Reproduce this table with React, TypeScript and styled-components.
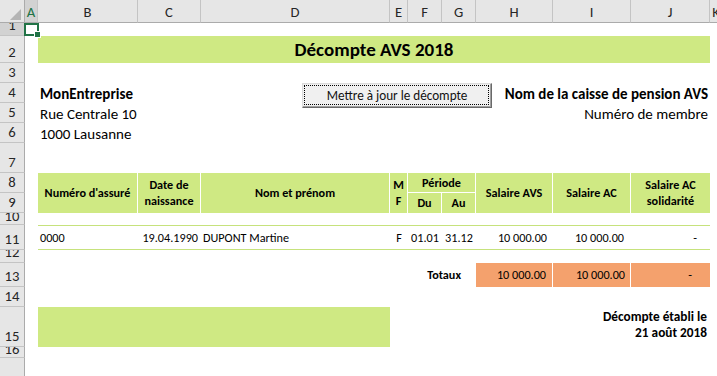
import React from "react";
import styled, { createGlobalStyle } from "styled-components";

const GREEN = "#cfe983";
const LINE_GREEN = "#c6e27c";
const ORANGE = "#f4a16d";
const FONT = `Carlito, Lato, "Liberation Sans", sans-serif`;

const GlobalStyle = createGlobalStyle`
  html, body {
    margin: 0;
    padding: 0;
    background: #fff;
  }
  body {
    font-family: ${FONT};
    color: #000;
  }
`;

const COLS = ["A", "B", "C", "D", "E", "F", "G", "H", "I", "J", "K"];
const ROW_HEIGHTS = [13, 27, 20, 20, 20, 20, 30, 20, 20, 12, 25, 13, 24, 20, 40, 11, 40];
// rows too short for their number: Excel shows the label clipped at the top
const CLIPPED_ROWS = [1, 12, 16];

// grid line helpers: column "A" is grid column 2, sheet row n is grid row n + 1
const colIndex = (c: string) => COLS.indexOf(c) + 2;
const area = (r1: number, c1: string, r2 = r1, c2 = c1) =>
  `${r1 + 1} / ${colIndex(c1)} / ${r2 + 2} / ${colIndex(c2) + 1}`;

type Align = "left" | "center" | "right";

const Sheet = styled.div`
  position: relative;
  width: 717px;
  height: 376px;
  overflow: hidden;
  display: grid;
  grid-template-columns: 25px 13px 100px 63px 189px 18px 34px 34px 77px 78px 79px 13px;
  grid-template-rows: 23px ${ROW_HEIGHTS.map((h) => `${h}px`).join(" ")};
  font-size: 14.67px;
  background: #fff;
`;

const Corner = styled.div`
  grid-area: 1 / 1 / 2 / 2;
  background: #e6e6e6;
  border-right: 1px solid #ababab;
  border-bottom: 1px solid #ababab;
  box-sizing: border-box;
`;

const ColHead = styled.div<{ $col: number; $selected?: boolean }>`
  grid-row: 1;
  grid-column: ${(p) => p.$col};
  display: flex;
  align-items: center;
  justify-content: center;
  padding-top: 1px;
  background: ${(p) => (p.$selected ? "#d2d2d2" : "#e6e6e6")};
  color: ${(p) => (p.$selected ? "#217346" : "#262626")};
  border-right: 1px solid #c4c4c4;
  border-bottom: 1px solid #ababab;
  box-sizing: border-box;
  font-size: 14.67px;
  overflow: hidden;
`;

const RowHead = styled.div<{ $row: number; $clipped?: boolean; $pad: number; $selected?: boolean }>`
  grid-column: 1;
  grid-row: ${(p) => p.$row + 1};
  display: flex;
  align-items: ${(p) => (p.$clipped ? "flex-start" : "flex-end")};
  justify-content: center;
  padding-bottom: ${(p) => (p.$clipped ? 0 : p.$pad)}px;
  background: ${(p) => (p.$selected ? "#d2d2d2" : "#e6e6e6")};
  color: #262626;
  border-right: 1px solid #ababab;
  border-bottom: 1px solid #c4c4c4;
  box-sizing: border-box;
  font-size: 14.67px;
  line-height: 16px;
  overflow: hidden;
  span {
    margin-top: ${(p) => (p.$clipped ? -6 : 0)}px;
  }
`;

const Selection = styled.div`
  grid-area: ${area(1, "A")};
  position: relative;
  margin: 0 -1px 0 -1px;
  border: 2px solid #217346;
  &::after {
    content: "";
    position: absolute;
    right: -4px;
    bottom: -4px;
    width: 5px;
    height: 5px;
    background: #217346;
    border: 1px solid #fff;
  }
`;

const Cell = styled.div<{
  $area: string;
  $align?: Align;
  $bold?: boolean;
  $valign?: "center" | "end";
  $pad?: number;
}>`
  grid-area: ${(p) => p.$area};
  display: flex;
  flex-direction: column;
  justify-content: ${(p) => (p.$valign === "end" ? "flex-end" : "center")};
  align-items: ${(p) =>
    p.$align === "right" ? "flex-end" : p.$align === "center" ? "center" : "flex-start"};
  text-align: ${(p) => p.$align ?? "left"};
  font-weight: ${(p) => (p.$bold ? 700 : 400)};
  padding: 0 ${(p) => p.$pad ?? 2}px ${(p) => (p.$valign === "end" ? 1 : 0)}px;
  line-height: 16px;
  white-space: nowrap;
  min-width: 0;
`;

const Title = styled(Cell)`
  background: ${GREEN};
  font-size: 19px;
  line-height: 22px;
`;

const InfoCell = styled(Cell)`
  font-size: 15px;
`;

const HeadCell = styled(Cell)<{ $last?: boolean; $under?: boolean }>`
  font-size: 12.2px;
  background: ${GREEN};
  border-right: ${(p) => (p.$last ? "none" : "1px solid #fff")};
  border-bottom: ${(p) => (p.$under ? "1px solid #fff" : "none")};
`;

const DataCell = styled(Cell)`
  font-size: 12.2px;
`;

const TotalCell = styled(DataCell)<{ $last?: boolean }>`
  background: ${ORANGE};
  border-right: ${(p) => (p.$last ? "none" : "1px solid #fff")};
`;

const DataLine = styled.div`
  grid-area: ${area(11, "B", 11, "J")};
  border-top: 1px solid ${LINE_GREEN};
  border-bottom: 1px solid ${LINE_GREEN};
`;

const Band = styled.div<{ $area: string }>`
  grid-area: ${(p) => p.$area};
  background: ${GREEN};
`;

const StampCell = styled(Cell)`
  font-size: 13.3px;
  padding-bottom: 4px;
`;

const UpdateButton = styled.button`
  position: absolute;
  left: 302px;
  top: 83px;
  width: 190px;
  height: 25px;
  box-sizing: border-box;
  padding: 0;
  background: #f0f0f0;
  border: 1px solid;
  border-color: #dcdcdc #696969 #696969 #dcdcdc;
  box-shadow: inset -1px -1px #a0a0a0;
  font-family: ${FONT};
  font-size: 13.2px;
  color: #111;
  &::before {
    content: "";
    position: absolute;
    inset: 1px 2px 2px 1px;
    border: 1px dotted #000;
  }
`;

const App = () => {
  return (
    <>
      <GlobalStyle />
      <Sheet>
        <Corner>
          <svg width="24" height="22" viewBox="0 0 24 22">
            <polygon points="21,9 21,20 10,20" fill="#b4b4b4" />
          </svg>
        </Corner>
        {COLS.map((c, i) => (
          <ColHead key={c} $col={i + 2} $selected={c === "A"}>
            {c}
          </ColHead>
        ))}
        {ROW_HEIGHTS.map((h, i) => (
          <RowHead
            key={i}
            $row={i + 1}
            $clipped={CLIPPED_ROWS.includes(i + 1)}
            $pad={h < 15 ? 0 : 2}
            $selected={i === 0}
          >
            <span>{i + 1}</span>
          </RowHead>
        ))}

        <Title $area={area(2, "B", 2, "J")} $align="center" $bold>
          Décompte AVS 2018
        </Title>

        <InfoCell $area={area(4, "B", 4, "D")} $bold $valign="end">MonEntreprise</InfoCell>
        <InfoCell $area={area(5, "B", 5, "D")} $valign="end">Rue Centrale 10</InfoCell>
        <InfoCell $area={area(6, "B", 6, "D")} $valign="end">1000 Lausanne</InfoCell>
        <InfoCell $area={area(4, "F", 4, "J")} $align="right" $bold $valign="end">
          Nom de la caisse de pension AVS
        </InfoCell>
        <InfoCell $area={area(5, "F", 5, "J")} $align="right" $valign="end">
          Numéro de membre
        </InfoCell>

        <HeadCell $area={area(8, "B", 9, "B")} $align="center" $bold>Numéro d'assuré</HeadCell>
        <HeadCell $area={area(8, "C", 9, "C")} $align="center" $bold>
          <span>Date de</span>
          <span>naissance</span>
        </HeadCell>
        <HeadCell $area={area(8, "D", 9, "D")} $align="center" $bold>Nom et prénom</HeadCell>
        <HeadCell $area={area(8, "E", 9, "E")} $align="center" $bold $pad={0}>
          <span>M</span>
          <span>F</span>
        </HeadCell>
        <HeadCell $area={area(8, "F", 8, "G")} $align="center" $bold $under>Période</HeadCell>
        <HeadCell $area={area(9, "F")} $align="center" $bold>Du</HeadCell>
        <HeadCell $area={area(9, "G")} $align="center" $bold>Au</HeadCell>
        <HeadCell $area={area(8, "H", 9, "H")} $align="center" $bold>Salaire AVS</HeadCell>
        <HeadCell $area={area(8, "I", 9, "I")} $align="center" $bold>Salaire AC</HeadCell>
        <HeadCell $area={area(8, "J", 9, "J")} $align="center" $bold $last>
          <span>Salaire AC</span>
          <span>solidarité</span>
        </HeadCell>

        <DataLine />
        <DataCell $area={area(11, "B")}>0000</DataCell>
        <DataCell $area={area(11, "C")} $align="right" $pad={3}>19.04.1990</DataCell>
        <DataCell $area={area(11, "D")}>DUPONT Martine</DataCell>
        <DataCell $area={area(11, "E")} $align="center" $pad={0}>F</DataCell>
        <DataCell $area={area(11, "F")} $align="center" $pad={0}>01.01</DataCell>
        <DataCell $area={area(11, "G")} $align="center" $pad={0}>31.12</DataCell>
        <DataCell $area={area(11, "H")} $align="right" $pad={6}>10 000.00</DataCell>
        <DataCell $area={area(11, "I")} $align="right" $pad={7}>10 000.00</DataCell>
        <DataCell $area={area(11, "J")} $align="right" $pad={13}>-</DataCell>

        <DataCell $area={area(13, "F", 13, "G")} $align="right" $bold $pad={15}>Totaux</DataCell>
        <TotalCell $area={area(13, "H")} $align="right" $pad={6}>10 000.00</TotalCell>
        <TotalCell $area={area(13, "I")} $align="right" $pad={5}>10 000.00</TotalCell>
        <TotalCell $area={area(13, "J")} $align="right" $pad={18} $last>-</TotalCell>

        <Band $area={area(15, "B", 15, "D")} />
        <StampCell $area={area(15, "F", 15, "J")} $align="right" $bold $pad={3}>
          <span>Décompte établi le</span>
          <span>21 août 2018</span>
        </StampCell>

        <Selection />
        <UpdateButton type="button">Mettre à jour le décompte</UpdateButton>
      </Sheet>
    </>
  );
};

export default App;
